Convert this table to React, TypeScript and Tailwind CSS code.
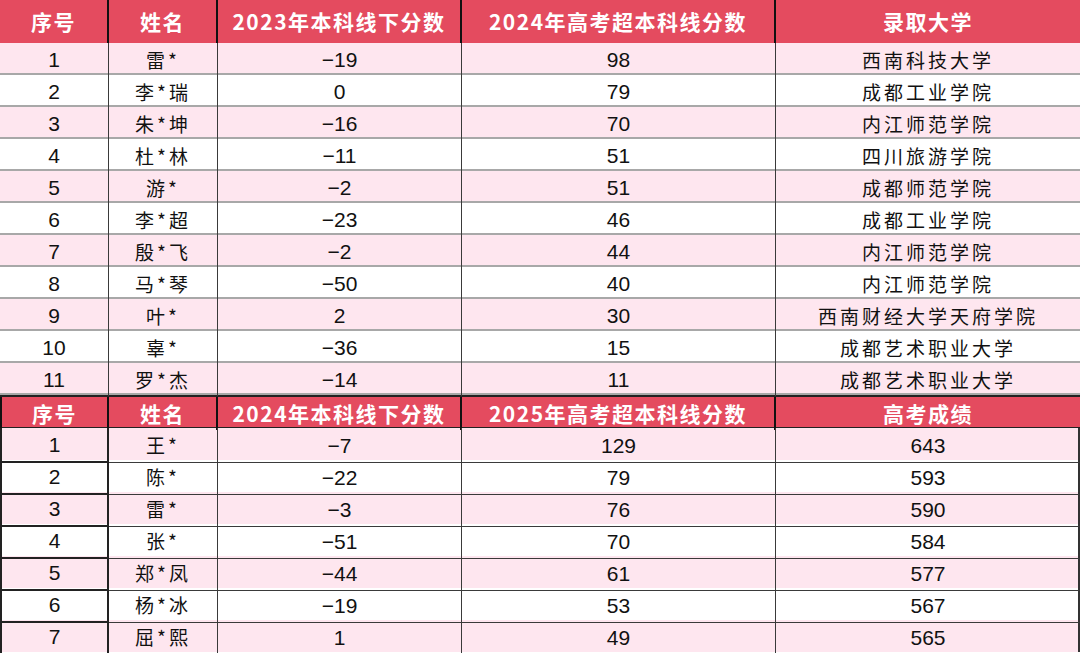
import React from "react"

const cols = "grid grid-cols-[109px_109px_244px_314px_304px]"
const sans = "font-['Liberation_Sans','Noto_Sans_CJK_SC',sans-serif]"
const cjk = "font-['Noto_Sans_CJK_SC',sans-serif]"

const first = [
  ["1", "雷*", "−19", "98", "西南科技大学"],
  ["2", "李*瑞", "0", "79", "成都工业学院"],
  ["3", "朱*坤", "−16", "70", "内江师范学院"],
  ["4", "杜*林", "−11", "51", "四川旅游学院"],
  ["5", "游*", "−2", "51", "成都师范学院"],
  ["6", "李*超", "−23", "46", "成都工业学院"],
  ["7", "殷*飞", "−2", "44", "内江师范学院"],
  ["8", "马*琴", "−50", "40", "内江师范学院"],
  ["9", "叶*", "2", "30", "西南财经大学天府学院"],
  ["10", "辜*", "−36", "15", "成都艺术职业大学"],
  ["11", "罗*杰", "−14", "11", "成都艺术职业大学"],
]

const second = [
  ["1", "王*", "−7", "129", "643"],
  ["2", "陈*", "−22", "79", "593"],
  ["3", "雷*", "−3", "76", "590"],
  ["4", "张*", "−51", "70", "584"],
  ["5", "郑*凤", "−44", "61", "577"],
  ["6", "杨*冰", "−19", "53", "567"],
  ["7", "屈*熙", "1", "49", "565"],
]

function Header({ titles, top }: { titles: string[]; top?: boolean }) {
  return (
    <div
      className={`${cols} bg-[#e44b5f] text-white font-bold text-[21px] tracking-[1.5px] ${cjk} ${
        top ? "h-[43px]" : "h-[33px] border-t-2 border-b border-[#222]"
      }`}
    >
      {titles.map((t, i) => (
        <div
          key={i}
          className={`flex items-center justify-center pt-[1px] ${
            i < 4 ? "border-r-2 border-[#111]" : ""
          } ${!top && i === 0 ? "border-l-2 border-[#111]" : ""}`}
        >
          {t}
        </div>
      ))}
    </div>
  )
}

function Cell({ text, kind, cls }: { text: string; kind: "num" | "cjk"; cls: string }) {
  return (
    <div
      className={`flex items-center justify-center pt-[1px] ${cls} ${
        kind === "cjk" ? `${cjk} text-[19px] tracking-[3px]` : `${sans} text-[21px]`
      }`}
    >
      {text}
    </div>
  )
}

export default function App() {
  return (
    <div className="w-[1080px] h-[653px] bg-white overflow-hidden text-[#111]">
      <Header
        top
        titles={["序号", "姓名", "2023年本科线下分数", "2024年高考超本科线分数", "录取大学"]}
      />
      {first.map((r, idx) => (
        <div
          key={idx}
          className={`${cols} h-[32px] border-b-2 border-[#a8a8a8] ${
            idx % 2 === 0 ? "bg-[#fee6ef]" : "bg-white"
          }`}
        >
          {r.map((c, i) => (
            <Cell
              key={i}
              text={c}
              kind={i === 1 || i === 4 ? "cjk" : "num"}
              cls={i < 4 ? "border-r border-[#3a3a3a]" : ""}
            />
          ))}
        </div>
      ))}
      <Header titles={["序号", "姓名", "2024年本科线下分数", "2025年高考超本科线分数", "高考成绩"]} />
      {second.map((r, idx) => (
        <div
          key={idx}
          className={`${cols} h-[32px] border-r-2 border-[#333] ${
            idx % 2 === 0 ? "bg-[#fee6ef]" : "bg-white"
          }`}
        >
          {r.map((c, i) => (
            <Cell
              key={i}
              text={c}
              kind={i === 1 ? "cjk" : "num"}
              cls={
                i === 0
                  ? "border-2 border-t-0 border-[#222]"
                  : i < 4
                  ? "border-r border-b border-[#3a3a3a]"
                  : "border-b border-[#3a3a3a]"
              }
            />
          ))}
        </div>
      ))}
    </div>
  )
}
